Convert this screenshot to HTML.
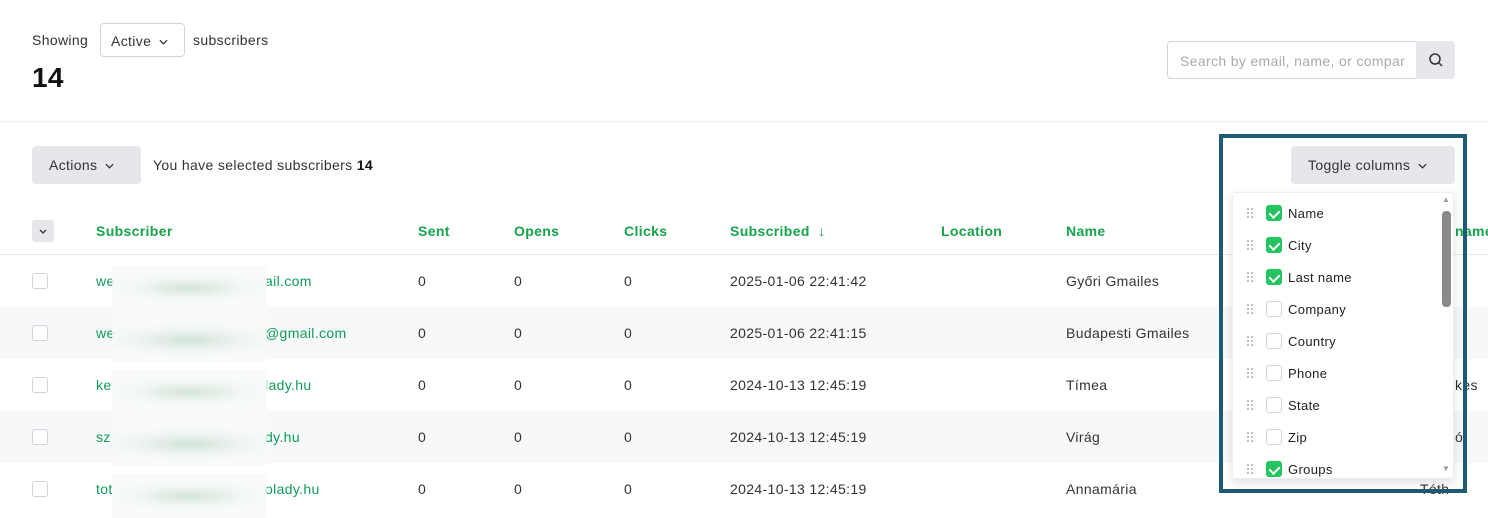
<!DOCTYPE html>
<html><head><style>
*{box-sizing:border-box;margin:0;padding:0}
body{width:1488px;height:514px;overflow:hidden;background:#fff;font-family:"Liberation Sans",sans-serif;font-size:14px;color:#333;position:relative;letter-spacing:0.35px}
.a{position:absolute;white-space:nowrap}
.g{color:#0f9d58}
.hd{color:#16a34a;font-weight:bold;font-size:14px}
.row{position:absolute;left:0;width:1488px;height:52px}
.cb{position:absolute;width:16px;height:16px;border:1px solid #d1d5db;border-radius:3px;background:#fff}
.blur{position:absolute;width:155px;height:44px;background:radial-gradient(ellipse 60% 40% at 50% 50%,rgba(200,222,208,.8),rgba(235,243,238,.6) 60%,rgba(248,250,249,.9) 100%)}
.it{position:absolute;font-size:13px;color:#222}
.dr{position:absolute;left:1246px;width:8px;height:12px;background:radial-gradient(circle,#bbb 1px,transparent 1.3px) 0 0/4px 4px}
.ck{position:absolute;left:1266px;width:16px;height:16px;border-radius:3px;border:1px solid #d1d5db;background:#fff}
.ck.on{background:#22c55e;border-color:#22c55e}
.ck.on:after{content:"";position:absolute;left:4px;top:2px;width:5px;height:8px;border:solid #fff;border-width:0 2px 2px 0;transform:rotate(45deg)}
.chev{display:inline-block;vertical-align:middle;margin-left:8px}
</style></head><body>
<svg width="0" height="0" style="position:absolute"><defs><symbol id="cv" viewBox="0 0 10 6"><path d="M1 1l4 4 4-4" fill="none" stroke="#333" stroke-width="1.4"/></symbol></defs></svg>
<div class="a" style="left:32px;top:32px">Showing</div>
<div class="a" style="left:100px;top:23px;width:85px;height:34px;border:1px solid #d1d5db;border-radius:4px;padding:9px 10px">Active<svg class="chev" width="9" height="6"><use href="#cv"/></svg></div>
<div class="a" style="left:193px;top:32px">subscribers</div>
<div class="a" style="left:32px;top:62px;font-size:28px;font-weight:bold;color:#111">14</div>
<div class="a" style="left:1167px;top:41px;width:250px;height:38px;border:1px solid #d1d5db;border-radius:4px 0 0 4px;padding:11px 12px;color:#aaa;overflow:hidden">Search by email, name, or compar</div>
<div class="a" style="left:1416px;top:41px;width:39px;height:38px;background:#e5e7eb;border-radius:0 4px 4px 0"><svg width="39" height="38"><circle cx="19" cy="18" r="5" fill="none" stroke="#333" stroke-width="1.5"/><line x1="23" y1="22" x2="26" y2="25" stroke="#333" stroke-width="1.5"/></svg></div>
<div class="a" style="left:0;top:121px;width:1488px;border-top:1px solid #eee"></div>
<div class="a" style="left:32px;top:146px;width:109px;height:38px;background:#e5e7eb;border-radius:4px;padding:11px 17px">Actions<svg class="chev" width="9" height="6"><use href="#cv"/></svg></div>
<div class="a" style="left:153px;top:157px">You have selected subscribers <b style="color:#111">14</b></div>

<div class="a" style="left:32px;top:220px;width:22px;height:22px;background:#e5e7eb;border-radius:3px"><svg width="22" height="22"><path d="M8 10l3 3 3-3" fill="none" stroke="#333" stroke-width="1.3"/></svg></div>
<div class="a hd" style="left:96px;top:223px">Subscriber</div>
<div class="a hd" style="left:418px;top:223px">Sent</div>
<div class="a hd" style="left:514px;top:223px">Opens</div>
<div class="a hd" style="left:624px;top:223px">Clicks</div>
<div class="a hd" style="left:730px;top:223px">Subscribed &nbsp;↓</div>
<div class="a hd" style="left:941px;top:223px">Location</div>
<div class="a hd" style="left:1066px;top:223px">Name</div>
<div class="a hd" style="left:1455px;top:223px">name</div>
<div class="a" style="left:0;top:254px;width:1488px;border-top:1px solid #e5e7eb"></div>

<div class="row" style="top:307px;background:#f7f8fa"></div>
<div class="row" style="top:411px;background:#f7f8fa"></div>

<div class="cb" style="left:32px;top:273px"></div><div class="a g" style="left:96px;top:273px">we</div><div class="a g" style="left:265px;top:273px">ail.com</div>
<div class="cb" style="left:32px;top:325px"></div><div class="a g" style="left:96px;top:325px">we</div><div class="a g" style="left:265px;top:325px">@gmail.com</div>
<div class="cb" style="left:32px;top:377px"></div><div class="a g" style="left:96px;top:377px">ke</div><div class="a g" style="left:265px;top:377px">lady.hu</div>
<div class="cb" style="left:32px;top:429px"></div><div class="a g" style="left:96px;top:429px">sz</div><div class="a g" style="left:265px;top:429px">dy.hu</div>
<div class="cb" style="left:32px;top:481px"></div><div class="a g" style="left:96px;top:481px">tot</div><div class="a g" style="left:265px;top:481px">olady.hu</div>
<div class="blur" style="left:112px;top:266px"></div><div class="blur" style="left:112px;top:318px"></div><div class="blur" style="left:112px;top:370px"></div><div class="blur" style="left:112px;top:422px"></div><div class="blur" style="left:112px;top:474px"></div>

<div class="a" style="left:418px;top:273px">0</div><div class="a" style="left:514px;top:273px">0</div><div class="a" style="left:624px;top:273px">0</div><div class="a" style="left:730px;top:273px">2025-01-06 22:41:42</div><div class="a" style="left:1066px;top:273px">Győri Gmailes</div>
<div class="a" style="left:418px;top:325px">0</div><div class="a" style="left:514px;top:325px">0</div><div class="a" style="left:624px;top:325px">0</div><div class="a" style="left:730px;top:325px">2025-01-06 22:41:15</div><div class="a" style="left:1066px;top:325px">Budapesti Gmailes</div>
<div class="a" style="left:418px;top:377px">0</div><div class="a" style="left:514px;top:377px">0</div><div class="a" style="left:624px;top:377px">0</div><div class="a" style="left:730px;top:377px">2024-10-13 12:45:19</div><div class="a" style="left:1066px;top:377px">Tímea</div><div class="a" style="left:1455px;top:377px">kes</div>
<div class="a" style="left:418px;top:429px">0</div><div class="a" style="left:514px;top:429px">0</div><div class="a" style="left:624px;top:429px">0</div><div class="a" style="left:730px;top:429px">2024-10-13 12:45:19</div><div class="a" style="left:1066px;top:429px">Virág</div><div class="a" style="left:1455px;top:429px">ó</div>
<div class="a" style="left:418px;top:481px">0</div><div class="a" style="left:514px;top:481px">0</div><div class="a" style="left:624px;top:481px">0</div><div class="a" style="left:730px;top:481px">2024-10-13 12:45:19</div><div class="a" style="left:1066px;top:481px">Annamária</div><div class="a" style="left:1420px;top:481px">Tóth</div>

<div class="a" style="left:1219px;top:134px;width:248px;height:359px;border:4px solid #1d5a73;background:transparent"></div>
<div class="a" style="left:1291px;top:146px;width:164px;height:38px;background:#e5e7eb;border-radius:4px;padding:11px 17px">Toggle columns<svg class="chev" width="9" height="6"><use href="#cv"/></svg></div>
<div class="a" style="left:1232px;top:192px;width:222px;height:287px;background:#fff;border:1px solid #eee;border-radius:3px;box-shadow:0 4px 10px rgba(0,0,0,.12)"></div>
<div class="a" style="left:1442px;top:211px;width:9px;height:96px;background:#8a8a8a;border-radius:4px"></div>
<div class="a" style="left:1442px;top:195px;font-size:8px;color:#999">▲</div>
<div class="a" style="left:1442px;top:464px;font-size:8px;color:#999">▼</div>

<div class="dr" style="top:207px"></div><div class="ck on" style="top:205px"></div><div class="it" style="left:1288px;top:206px">Name</div>
<div class="dr" style="top:239px"></div><div class="ck on" style="top:237px"></div><div class="it" style="left:1288px;top:238px">City</div>
<div class="dr" style="top:271px"></div><div class="ck on" style="top:269px"></div><div class="it" style="left:1288px;top:270px">Last name</div>
<div class="dr" style="top:303px"></div><div class="ck" style="top:301px"></div><div class="it" style="left:1288px;top:302px">Company</div>
<div class="dr" style="top:335px"></div><div class="ck" style="top:333px"></div><div class="it" style="left:1288px;top:334px">Country</div>
<div class="dr" style="top:367px"></div><div class="ck" style="top:365px"></div><div class="it" style="left:1288px;top:366px">Phone</div>
<div class="dr" style="top:399px"></div><div class="ck" style="top:397px"></div><div class="it" style="left:1288px;top:398px">State</div>
<div class="dr" style="top:431px"></div><div class="ck" style="top:429px"></div><div class="it" style="left:1288px;top:430px">Zip</div>
<div class="dr" style="top:463px"></div><div class="ck on" style="top:461px"></div><div class="it" style="left:1288px;top:462px">Groups</div>
</body></html>
